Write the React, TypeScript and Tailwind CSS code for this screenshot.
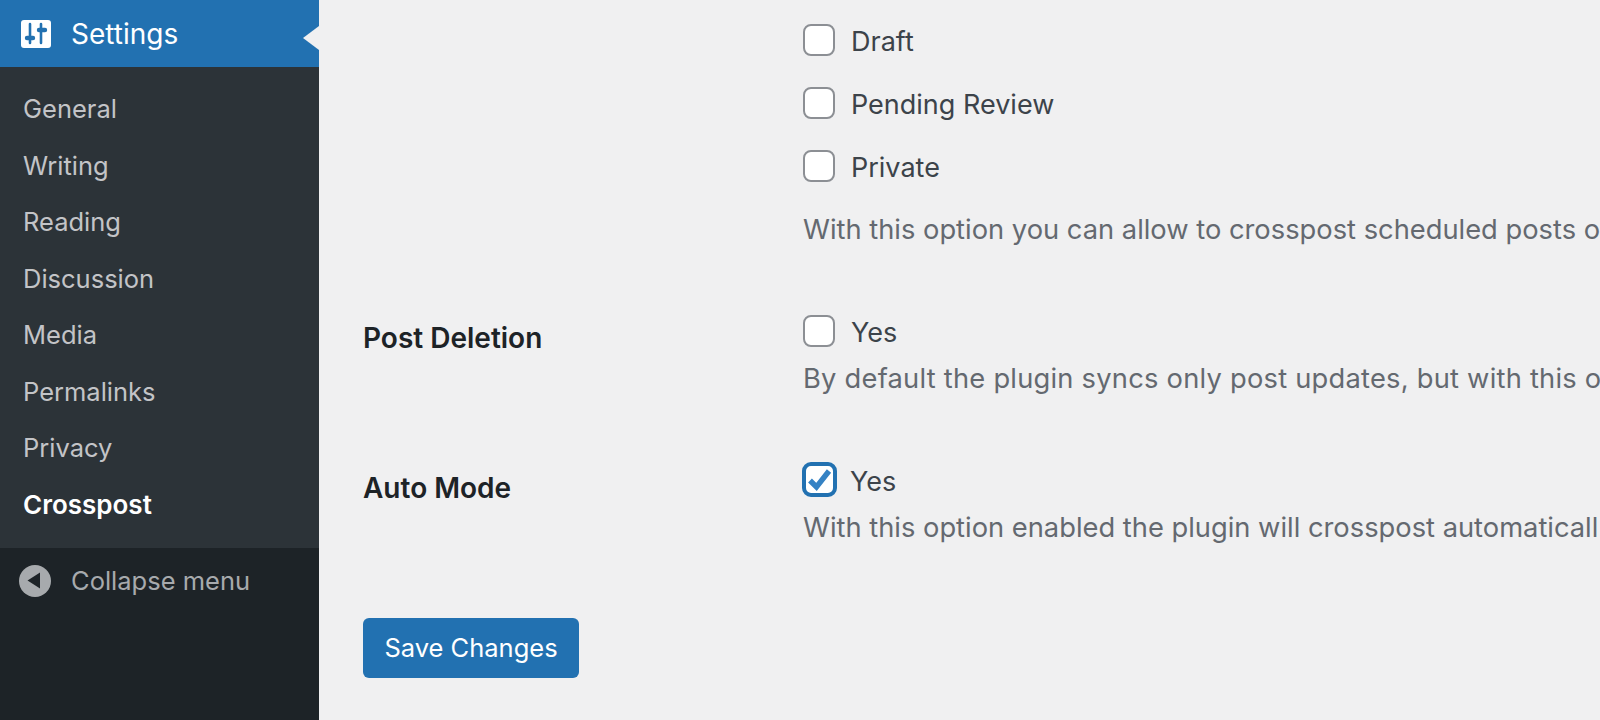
const font = { fontFamily: "Inter, 'Liberation Sans', sans-serif" };

const menu = ["General", "Writing", "Reading", "Discussion", "Media", "Permalinks", "Privacy"];

function SettingsIcon() {
  return (
    <svg width="30" height="28" viewBox="0 0 30 28" className="block">
      <rect width="30" height="28" rx="3" fill="#fff" />
      <path d="M9 4v19M20 4v19" stroke="#2271b1" strokeWidth="2.6" strokeLinecap="round" />
      <path d="M6 18h6M18 10h6" stroke="#2271b1" strokeWidth="4.4" strokeLinecap="round" />
    </svg>
  );
}

function Box({ label, checked }: { label: string; checked?: boolean }) {
  return (
    <div className="flex items-center">
      {checked ? (
        <span className="-ml-px mr-[13px] flex h-[35px] w-[35px] items-center justify-center rounded-[9px] border-4 border-[#2271b1] bg-white">
          <svg width="25" height="24" viewBox="0 0 25 24">
            <path d="M3 12.5l6.5 6.5L22 3" fill="none" stroke="#3582c4" strokeWidth="5.4" />
          </svg>
        </span>
      ) : (
        <span className="mr-4 h-8 w-8 rounded-lg border-2 border-[#8c8f94] bg-white" />
      )}
      <span className="pt-[3px] text-[27px] leading-[29px] text-[#3c434a]">{label}</span>
    </div>
  );
}

function Desc({ children, wide }: { children: string; wide?: boolean }) {
  return (
    <p className={wide ? "whitespace-nowrap text-[27.3px] leading-8 tracking-[0.23px] text-[#646970]" : "whitespace-nowrap text-[27.3px] leading-8 text-[#646970]"}>
      {children}
    </p>
  );
}

export default function App() {
  return (
    <div style={font} className="flex h-[720px] w-[1600px] overflow-hidden bg-[#f0f0f1]">
      <aside className="flex w-[319px] shrink-0 flex-col bg-[#1d2327]">
        <div className="relative flex h-[67px] items-center gap-5 bg-[#2271b1] pl-[21px] text-white">
          <SettingsIcon />
          <span className="text-[28px]">Settings</span>
          <span className="absolute right-0 top-[26px] h-0 w-0 border-y-[12px] border-r-[16px] border-y-transparent border-r-[#f0f0f1]" />
        </div>
        <nav className="flex h-[481px] flex-col bg-[#2c3338] pl-[23px] pt-[14px]">
          {menu.map((m) => (
            <div key={m} className="flex h-[56.5px] items-center text-[25.5px] text-[#c3c4c7]">{m}</div>
          ))}
          <div className="flex h-[56.5px] items-center text-[26px] font-semibold text-white">Crosspost</div>
        </nav>
        <div className="flex items-center gap-5 pl-[19px] pt-[14px]">
          <svg width="32" height="32" viewBox="0 0 32 32">
            <circle cx="16" cy="16" r="16" fill="#a7aaad" />
            <path d="M21 7.5v16L8.5 15.5z" fill="#1d2327" />
          </svg>
          <span className="text-[25.5px] text-[#a7aaad]">Collapse menu</span>
        </div>
      </aside>
      <main className="flex min-w-0 flex-1 flex-col pl-[44px] pt-6">
        <div className="flex">
          <div className="w-[440px] shrink-0" />
          <div className="flex flex-col gap-[31px]">
            <Box label="Draft" />
            <Box label="Pending Review" />
            <Box label="Private" />
          </div>
        </div>
        <div className="ml-[440px] mt-8">
          <Desc>With this option you can allow to crosspost scheduled posts o</Desc>
        </div>
        <div className="mt-[69px] flex">
          <div className="w-[440px] shrink-0 pt-[7px] text-[28px] font-semibold leading-8 text-[#1d2327]">Post Deletion</div>
          <div className="flex flex-col gap-4">
            <Box label="Yes" />
            <Desc wide>By default the plugin syncs only post updates, but with this o</Desc>
          </div>
        </div>
        <div className="mt-[67px] flex">
          <div className="w-[440px] shrink-0 pt-[10px] text-[28px] font-semibold leading-8 text-[#1d2327]">Auto Mode</div>
          <div className="flex flex-col gap-[15px]">
            <Box label="Yes" checked />
            <Desc>With this option enabled the plugin will crosspost automaticall</Desc>
          </div>
        </div>
        <button className="mt-[74px] h-[60px] w-[216px] rounded-md bg-[#2271b1] text-[25.5px] text-white">Save Changes</button>
      </main>
    </div>
  );
}
